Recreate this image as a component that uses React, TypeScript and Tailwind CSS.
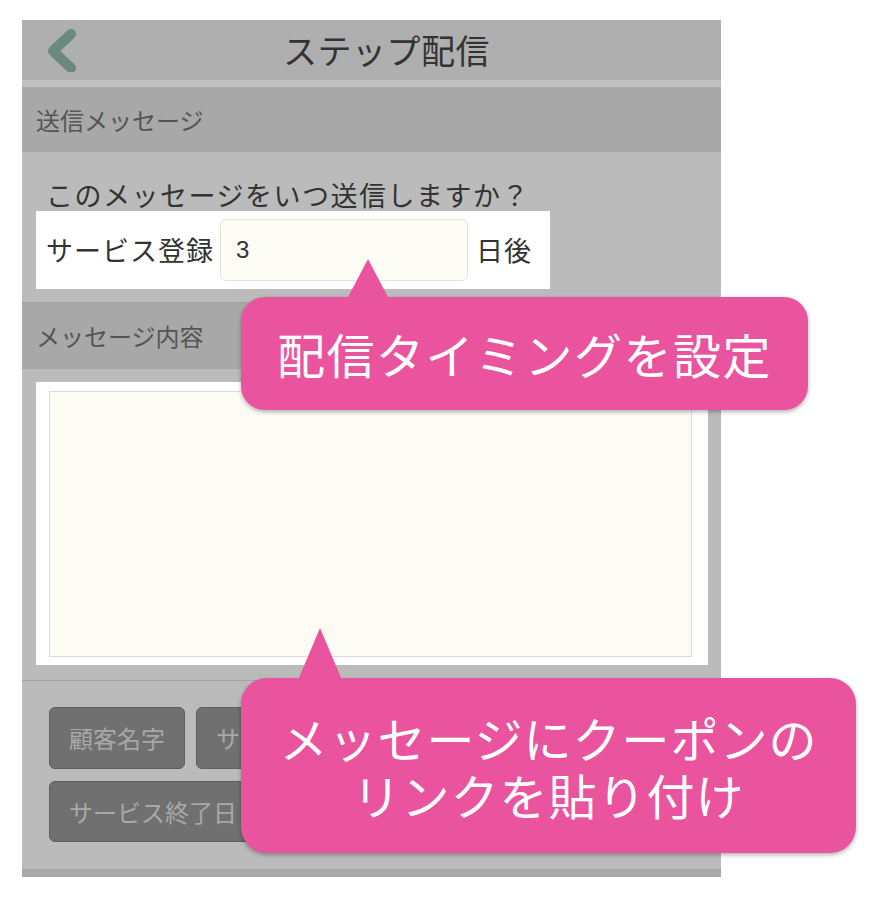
import React from "react";

const Callout: React.FC<{
    className: string;
    tailClassName: string;
    tailWidth: number;
    tailHeight: number;
    children: React.ReactNode;
}> = (props): React.ReactElement => {
    return (
        <div className={props.className}>
            <svg
                className={props.tailClassName}
                width={props.tailWidth}
                height={props.tailHeight + 2}
                viewBox={`0 0 ${props.tailWidth} ${props.tailHeight + 2}`}
            >
                <polygon
                    points={`${props.tailWidth / 2},0 ${props.tailWidth},${props.tailHeight + 2} 0,${props.tailHeight + 2}`}
                    fill="#ea539d"
                />
            </svg>
            {props.children}
        </div>
    );
};

export default function App(): React.ReactElement {
    return (
        <div className="relative w-[878px] h-[898px] bg-white font-['Noto_Sans_CJK_JP',sans-serif] overflow-hidden">
            <div className="pt-[20px] pl-[22px]">
                <div className="w-[699px] flex flex-col">
                    {/* header */}
                    <div className="h-[60px] bg-[#afafaf] flex items-center">
                        <div className="w-[80px] pl-[24px] flex items-center">
                            <svg width="34" height="44" viewBox="0 0 34 44">
                                <polyline
                                    points="25,6 7,23 25,40"
                                    fill="none"
                                    stroke="#6a8a80"
                                    strokeWidth="10"
                                    strokeLinecap="round"
                                    strokeLinejoin="round"
                                />
                            </svg>
                        </div>
                        <div className="flex-1 pr-[50px] text-center text-[34px] leading-[40px] tracking-[0.5px] text-[#333333]">
                            ステップ配信
                        </div>
                    </div>
                    <div className="h-[7px] bg-[#c0c0c0]" />

                    {/* section 1 */}
                    <div className="h-[65px] bg-[#a8a8a8] flex items-center px-[14px] text-[24px] text-[#555555]">
                        送信メッセージ
                    </div>
                    <div className="bg-[#bbbbbb] pt-[27px] pb-[13px]">
                        <div className="pl-[24px] text-[27px] leading-[32px] tracking-[1.5px] text-[#333333]">
                            このメッセージをいつ送信しますか？
                        </div>
                        <div className="ml-[14px] w-[514px] h-[78px] bg-white flex items-center pl-[10px] text-[27px] tracking-[1px] text-[#333333]">
                            <span>サービス登録</span>
                            <input
                                readOnly
                                value="3"
                                className="ml-[6px] w-[248px] h-[62px] rounded-[6px] border border-[#e2e2dc] bg-[#fdfdf5] px-[15px] text-[24px] font-['Liberation_Sans',sans-serif] text-[#333333] outline-none"
                            />
                            <span className="ml-[8px]">日後</span>
                        </div>
                    </div>

                    {/* section 2 */}
                    <div className="h-[67px] bg-[#a8a8a8] border-t border-[#9e9e9e] flex items-center px-[14px] text-[24px] text-[#555555]">
                        メッセージ内容
                    </div>
                    <div className="bg-[#bbbbbb] pt-[13px] pb-[15px]">
                        <div className="ml-[14px] w-[672px] h-[283px] bg-white pl-[13px] pt-[9px]">
                            <textarea
                                readOnly
                                className="block w-[643px] h-[266px] resize-none border border-[#dcdcd6] bg-[#fcfcf4] outline-none"
                            />
                        </div>
                    </div>

                    {/* insert buttons */}
                    <div className="bg-[#bbbbbb] border-t border-[#a4a4a4] pt-[26px] pb-[27px] pl-[27px] flex flex-col gap-[12px]">
                        <div className="flex gap-[11px]">
                            <div className="h-[62px] px-[19px] rounded-[6px] border border-[#5e5e5e] bg-[#707070] flex items-center text-[24px] text-[#a8a8a8]">
                                顧客名字
                            </div>
                            <div className="h-[62px] px-[19px] rounded-[6px] border border-[#5e5e5e] bg-[#707070] flex items-center text-[24px] text-[#a8a8a8]">
                                サービス名
                            </div>
                        </div>
                        <div className="flex">
                            <div className="h-[61px] px-[19px] rounded-[6px] border border-[#5e5e5e] bg-[#707070] flex items-center text-[24px] text-[#a8a8a8]">
                                サービス終了日
                            </div>
                        </div>
                    </div>
                    <div className="h-[8px] bg-[#a8a8a8]" />
                </div>
            </div>

            {/* callouts */}
            <Callout
                className="absolute left-[241px] top-[297px] w-[567px] h-[113px] rounded-[24px] bg-[#ea539d] shadow-[0_2px_4px_rgba(0,0,0,0.3)] flex items-center justify-center text-white text-[48px] leading-[57px] tracking-[1.5px]"
                tailClassName="absolute left-[106px] top-[-38px]"
                tailWidth={42}
                tailHeight={38}
            >
                配信タイミングを設定
            </Callout>
            <Callout
                className="absolute left-[241px] top-[678px] w-[615px] h-[175px] rounded-[26px] bg-[#ea539d] shadow-[0_2px_4px_rgba(0,0,0,0.3)] flex flex-col items-center justify-center text-white text-[48px] leading-[57px] tracking-[1px]"
                tailClassName="absolute left-[57px] top-[-50px]"
                tailWidth={44}
                tailHeight={50}
            >
                <span>メッセージにクーポンの</span>
                <span>リンクを貼り付け</span>
            </Callout>
        </div>
    );
}
